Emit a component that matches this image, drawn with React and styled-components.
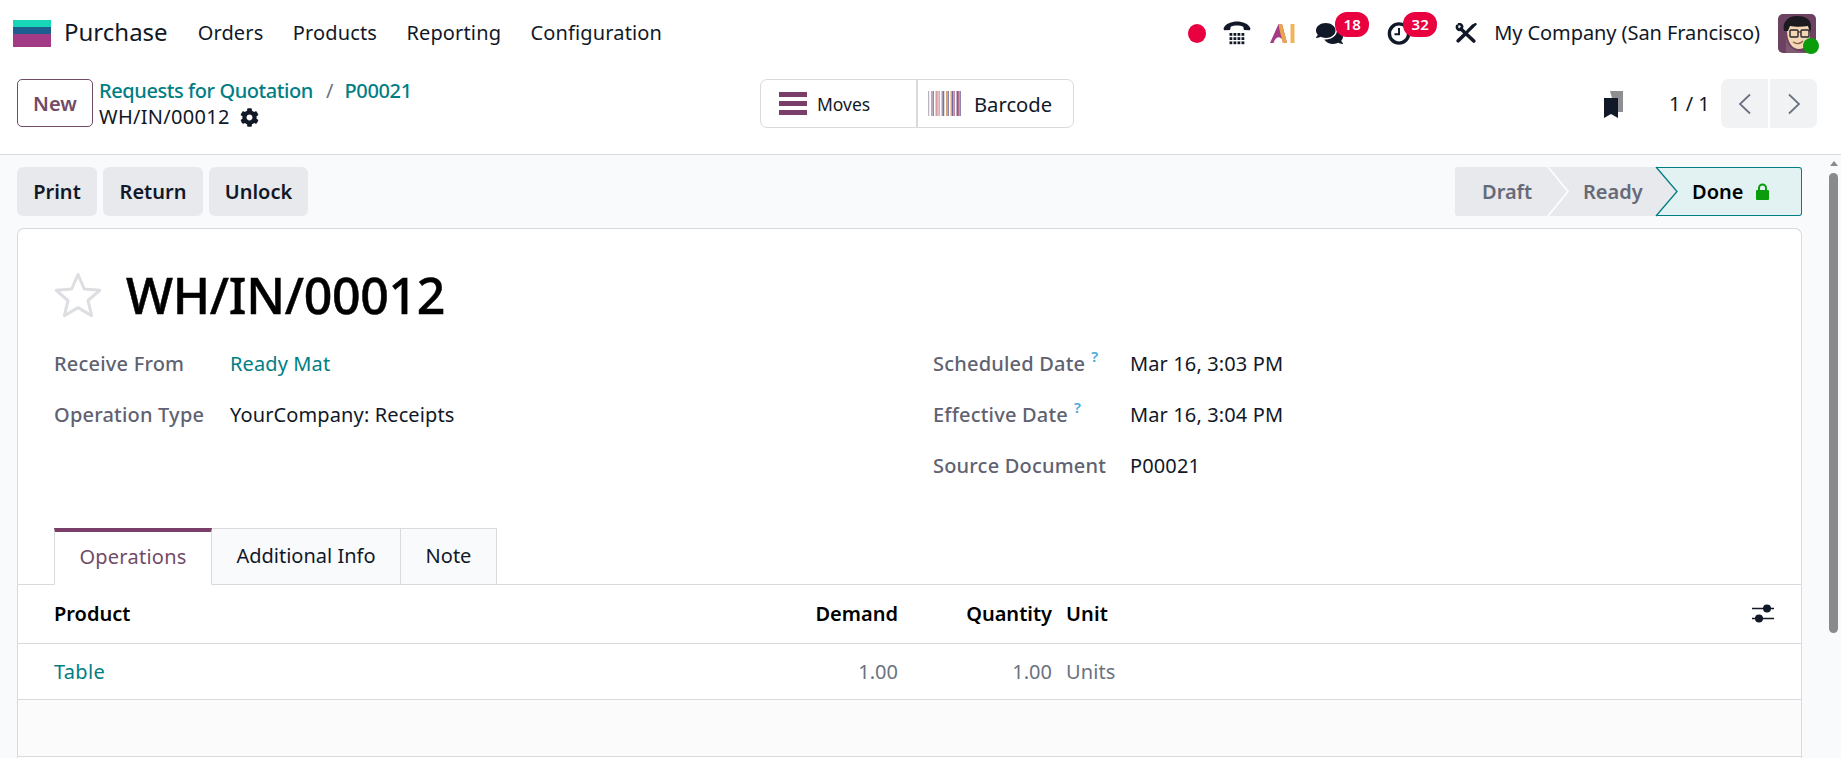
import React from "react";
import styled, { createGlobalStyle } from "styled-components";
import { FaComments, FaCog } from "react-icons/fa";

const Global = createGlobalStyle`
  html, body { margin: 0; padding: 0; height: 100%; overflow: hidden; background: #fff; }
  body { font-family: "Noto Sans", "Open Sans", sans-serif; font-size: 20px; color: #111827; font-variant-ligatures: none; }
  * { box-sizing: border-box; }
`;

const TEAL = "#017e84";
const PLUM = "#714b67";
const LINE = "#d8dadd";

const Page = styled.div`
  width: 1841px; height: 758px; overflow: hidden; display: flex; flex-direction: column;
`;
const Navbar = styled.header`
  flex: 0 0 66px; display: flex; align-items: center; padding: 0 25px 0 13px;
`;
const AppLogo = styled.svg`
  width: 38px; height: 27px; display: block; flex: none;
`;
const AppName = styled.span`
  margin: -2px 0 0 13px; font-size: 24px; line-height: 1;
`;
const Menu = styled.nav`
  display: flex; gap: 29.3px; margin: -2px 0 0 30px; font-size: 20px; letter-spacing: 0.15px;
`;
const Tray = styled.div`
  margin-left: auto; display: flex; align-items: center;
`;
const TrayItem = styled.div`
  position: relative; display: flex; align-items: center; justify-content: center;
  margin-left: ${(p) => p.$ml || 0}px; color: #111827;
`;
const RecordDot = styled.span`
  width: 18px; height: 19px; border-radius: 50%; background: #e8003f; display: block;
`;
const Badge = styled.span`
  position: absolute; top: ${(p) => p.$top}px; left: ${(p) => p.$left}px; width: 34px; height: 25px;
  border-radius: 12px; background: #e8003f; color: #fff; font-size: 15px; font-weight: 600;
  display: flex; align-items: center; justify-content: center;
`;
const Company = styled.span`
  margin: -2px 0 0 17px; font-size: 20px; white-space: nowrap; letter-spacing: -0.08px;
`;
const AvatarWrap = styled.div`
  position: relative; width: 38px; height: 39px; margin-left: 18px;
`;
const AvatarSvg = styled.svg`
  display: block; width: 38px; height: 39px; border-radius: 5px;
`;
const Online = styled.span`
  position: absolute; right: -3px; bottom: -1px; width: 16px; height: 16px;
  border-radius: 50%; background: #0a9c0a;
`;

const ControlPanel = styled.div`
  flex: 0 0 89px; display: grid; grid-template-columns: 743px 314px 1fr;
  padding: 13px 24px 0 17px; border-bottom: 1px solid ${LINE};
`;
const PanelLeft = styled.div`
  display: flex; gap: 6px; align-items: flex-start;
`;
const NewButton = styled.button`
  width: 76px; height: 48px; border: 1px solid ${PLUM}; border-radius: 5px; background: #fff;
  color: ${PLUM}; font: 600 20px "Noto Sans", sans-serif; padding: 0;
`;
const Crumbs = styled.div`
  display: flex; flex-direction: column; line-height: 26px; white-space: nowrap;
`;
const CrumbTop = styled.div`
  display: flex; align-items: center; height: 24px; font-weight: 500; color: ${TEAL};
`;
const CrumbParent = styled.span`
  letter-spacing: -0.42px;
`;
const CrumbLast = styled.span`
  letter-spacing: -0.35px;
`;
const CrumbSep = styled.span`
  color: #6b7280; font-weight: 400; margin: 0 11px 0 13px;
`;
const CrumbCurrent = styled.div`
  display: flex; align-items: center; gap: 10px; height: 28px; color: #111827; letter-spacing: 0.3px;
`;
const SwitchGroup = styled.div`
  height: 49px; display: flex; border: 1px solid ${LINE}; border-radius: 7px; width: 314px;
`;
const SwitchBtn = styled.div`
  display: flex; align-items: center; height: 100%;
  padding-left: ${(p) => p.$pl}px; width: ${(p) => p.$w}px;
  border-right: ${(p) => (p.$divider ? `2px solid ${LINE}` : "none")};
`;
const MovesIcon = styled.div`
  width: 28px; height: 23px; display: flex; flex-direction: column; justify-content: space-between;
  & > i { display: block; height: 5px; background: #7a3f68; }
`;
const SwitchLabel = styled.span`
  margin-left: ${(p) => p.$ml}px; font-size: ${(p) => p.$size}px; color: #111827;
`;
const Pager = styled.div`
  display: flex; align-items: center; justify-content: flex-end; height: 49px;
`;
const PagerText = styled.span`
  margin-left: 46px; width: 52px; white-space: nowrap;
`;
const PagerButtons = styled.div`
  display: flex; gap: 2px; border-radius: 7px; overflow: hidden;
`;
const PagerBtn = styled.div`
  width: 47px; height: 49px; background: #f1f2f4; display: flex; align-items: center; justify-content: center;
`;

const Body = styled.div`
  flex: 1; min-height: 0; display: flex; background: #f9fafb;
`;
const Main = styled.main`
  flex: 0 0 1827px; padding: 12px 25px 0 17px; display: flex; flex-direction: column; gap: 12px;
`;
const ActionRow = styled.div`
  display: flex; align-items: center; justify-content: space-between; height: 49px;
`;
const Actions = styled.div`
  display: flex; gap: 6px;
`;
const ActionBtn = styled.button`
  height: 49px; width: ${(p) => p.$w}px; border: 0; border-radius: 6px; background: #e7e9ed;
  color: #111827; font: 600 20px "Noto Sans", sans-serif; padding: 0;
`;
const StatusBar = styled.div`
  display: flex; height: 49px;
`;
const Step = styled.div`
  position: relative; width: ${(p) => p.$w}px; height: 49px; padding-left: ${(p) => p.$pl}px;
  display: flex; align-items: center; gap: 13px; font-weight: 600;
  background: ${(p) => (p.$done ? "#e2f2f3" : "#e7e9ed")};
  color: ${(p) => (p.$done ? "#000" : "#666a78")};
  border-radius: ${(p) => (p.$first ? "3px 0 0 3px" : p.$done ? "0 3px 3px 0" : "0")};
  ${(p) => p.$done && `border: 1.5px solid ${TEAL}; border-left: 0;`}
`;
const StepArrow = styled.svg`
  position: absolute; left: 0; top: ${(p) => (p.$done ? "-1.5px" : "0")}; width: 22px; height: 49px; overflow: visible;
`;
const Sheet = styled.section`
  flex: 1; background: #fff; border: 1px solid ${LINE}; border-bottom: 0; border-radius: 7px 7px 0 0;
  padding-top: 37px; min-height: 0;
`;
const TitleRow = styled.div`
  display: flex; align-items: center; gap: 24px; height: 58px; padding-left: 36px;
`;
const Title = styled.h1`
  margin: 0; font-size: 50px; font-weight: 500; line-height: 1; color: #000; letter-spacing: -0.3px;
  -webkit-text-stroke: 0.5px #000;
`;
const Fields = styled.div`
  margin-top: 14px; display: grid; grid-template-columns: 879px 1fr; padding-left: 36px;
`;
const FieldCol = styled.div`
  display: grid; grid-auto-rows: 51.2px; grid-template-columns: ${(p) => p.$label}px 1fr; align-items: center;
  align-content: start;
`;
const Label = styled.div`
  font-weight: 500; color: #5f6270; white-space: nowrap; letter-spacing: 0.2px;
`;
const Help = styled.span`
  color: #4aa9dc; font-size: 15px; font-weight: 600; margin-left: 6px; line-height: 0;
  position: relative; top: -9px;
`;
const Value = styled.div`
  color: ${(p) => (p.$link ? TEAL : "#111827")}; white-space: nowrap; letter-spacing: 0.12px;
`;
const TabBar = styled.div`
  margin-top: 36px; height: 57px; display: flex; padding-left: 36px; border-bottom: 1px solid ${LINE};
`;
const Tab = styled.div`
  width: ${(p) => p.$w}px; height: 57px; display: flex; align-items: center; justify-content: center;
  border: 1px solid ${LINE}; border-left-width: ${(p) => (p.$active ? 1 : 0)}px;
  background: ${(p) => (p.$active ? "#fff" : "#f9fafb")};
  color: ${(p) => (p.$active ? PLUM : "#111827")};
  padding-bottom: ${(p) => (p.$active ? 3 : 1)}px;
  ${(p) => p.$active && `border-bottom-color: #fff; border-top: 4px solid #7a3f68; letter-spacing: 0.25px;`}
`;
const Row = styled.div`
  display: grid; grid-template-columns: 686px 158px 154px 1fr; align-items: center;
  height: ${(p) => p.$h}px; padding: 0 27px 0 36px; border-bottom: 1px solid ${LINE};
  background: ${(p) => (p.$empty ? "#fbfbfc" : "#fff")};
  font-weight: ${(p) => (p.$head ? 600 : 400)};
  color: ${(p) => (p.$head ? "#000" : "#6b7280")};
`;
const Num = styled.div`
  text-align: right;
`;
const UnitCell = styled.div`
  padding-left: 14px; display: flex; justify-content: space-between; align-items: center; letter-spacing: 0.1px;
`;
const ProductLink = styled.div`
  color: ${TEAL}; letter-spacing: 0.3px;
`;
const ScrollTrack = styled.aside`
  flex: 0 0 14px; padding: 6px 3px 0 2px; display: flex; flex-direction: column; align-items: center;
`;
const ScrollArrow = styled.span`
  width: 0; height: 0; border-left: 4.5px solid transparent; border-right: 4.5px solid transparent;
  border-bottom: 5px solid #8a8a8a;
`;
const ScrollThumb = styled.span`
  width: 9px; height: 460px; margin-top: 7px; border-radius: 5px; background: #8a8a8a;
`;

const barColors = ["#b9b3c4","#fff","#c9a2b4","#8f8aa3","#fff","#d49aa8","#c9bfc9","#e0a9a0","#fff","#a79bb9","#7f6f9a","#fff","#d8a36a","#8a86b0","#fff","#e2a56a","#6f6a9a","#c98aa0","#fff","#7e5f96","#b56f8e","#8e87b5"];
const Barcode = () => (
  <svg width="33" height="25" viewBox="0 0 33 25" style={{ display: "block" }}>
    {barColors.map((c, i) => (
      <rect key={i} x={i * 1.5} y="0" width="1.5" height="25" fill={c} />
    ))}
  </svg>
);

const Phone = () => (
  <svg width="28" height="24" viewBox="0 0 28 24">
    <path d="M0.5 7.5C2.5 2.5 8.5 0.5 14 0.5s11.5 2 13.5 7l-.6 1.8-6-.2-.6-3.4C18.8 5 16.4 4.6 14 4.6s-4.8.4-6.3 1.1L7.1 9.100l-6 .2z" fill="#111827" />
    {[0, 1, 2, 3].map((c) =>
      [0, 1, 2].map((r) => (
        <rect key={`${c}${r}`} x={6.5 + c * 4} y={12 + r * 4.2} width="2.8" height="2.8" fill="#111827" />
      ))
    )}
  </svg>
);
const AiLogo = () => (
  <svg width="26" height="20" viewBox="0 0 26 20">
    <path d="M0 20 L8.5 1 L12 1 L17 20 L13 20 L12 16 C8 12 5 15 3.5 20Z" fill="#a53b87" />
    <path d="M8.5 1 L12 1 L17 20 L13 20 L10 9 Z" fill="#e9a74a" />
    <rect x="20.5" y="1" width="4" height="19" fill="#efb55c" />
  </svg>
);
const Clock = () => (
  <svg width="24" height="23" viewBox="0 0 24 23">
    <circle cx="12" cy="11.5" r="9.6" fill="none" stroke="#111827" strokeWidth="3.4" />
    <path d="M12 6v6.3H7.5" fill="none" stroke="#111827" strokeWidth="2" />
  </svg>
);
const Tools = () => (
  <svg width="22" height="20" viewBox="0 0 22 20" style={{ display: "block" }}>
    <g fill="none" stroke="#111827" strokeLinecap="round">
      <path d="M6 6L18.8 18" strokeWidth="3.6" />
      <path d="M2.2 2.8C1.2 5.4 3.4 7.6 6.2 6.6L7.2 3.6C6.8 1.8 5.4 1 4 1" strokeWidth="2.6" />
      <path d="M9.6 11.4L3.2 17.8" strokeWidth="3.6" />
      <path d="M12.6 8.400L18 3" strokeWidth="3.2" />
      <path d="M18.2 2.800L20.4 1.200" strokeWidth="2.6" />
    </g>
  </svg>
);
const Sliders = () => (
  <svg width="22" height="19" viewBox="0 0 22 19">
    <path d="M0 4.5h22M0 14.5h22" stroke="#111827" strokeWidth="1.6" />
    <circle cx="15" cy="4.5" r="4" fill="#111827" />
    <circle cx="7" cy="14.5" r="4" fill="#111827" />
  </svg>
);
const Star = () => (
  <svg width="48" height="46" viewBox="0 0 48 46">
    <path d="M24 2.5l6.3 14.5 15.5 1.3-11.8 10.2 3.6 15.2L24 35.6l-13.6 8.1 3.6-15.2L2.2 18.3l15.5-1.3z" fill="none" stroke="#dcdee2" strokeWidth="3" strokeLinejoin="round" />
  </svg>
);
const Chevron = ({ dir }) => (
  <svg width="14" height="22" viewBox="0 0 14 22">
    <path d={dir === "left" ? "M12 1.5L2 11l10 9.5" : "M2 1.5L12 11 2 20.5"} fill="none" stroke="#6b7280" strokeWidth="1.8" />
  </svg>
);
const Bookmarks = () => (
  <svg width="19" height="27" viewBox="0 0 19 27" style={{ display: "block", marginTop: 1 }}>
    <path d="M6 0h13v21h-7z" fill="#8f8f92" />
    <path d="M0 7h14v20l-7-4-7 4z" fill="#111827" />
  </svg>
);
const Lock = () => (
  <svg width="13" height="17" viewBox="0 0 13 17" style={{ display: "block" }}>
    <path d="M3 7V5a3.5 3.5 0 017 0v2" fill="none" stroke="#0a9c0a" strokeWidth="2" />
    <rect x="0" y="7" width="13" height="10" rx="1" fill="#0a9c0a" />
  </svg>
);
const Avatar = () => (
  <AvatarSvg viewBox="0 0 38 39">
    <rect width="38" height="39" fill="#6d4160" />
    <path d="M8 18c-1 10 3 17 12 19l10 2H8z" fill="#7f5a72" />
    <path d="M9 16c0 12 5 19 12 19 6 0 11-6 11-15V12H9z" fill="#f3d6b4" />
    <path d="M6 17C4 8 10 2 19 2c8 0 15 3 14 12l-1 5-2-7c-6 1-13 1-18 0l-2 5z" fill="#1b1a1f" />
    <rect x="12" y="16" width="8" height="7" rx="1" fill="none" stroke="#27262b" strokeWidth="1.4" />
    <rect x="23" y="16" width="8" height="7" rx="1" fill="none" stroke="#27262b" strokeWidth="1.4" />
    <path d="M20 18h3" stroke="#27262b" strokeWidth="1.2" />
    <path d="M15 28c3 2 7 2 10-1" fill="none" stroke="#8b5a45" strokeWidth="1.3" />
  </AvatarSvg>
);

export default function App() {
  return (
    <Page>
      <Global />
      <Navbar>
        <AppLogo viewBox="0 0 38 27">
          <rect width="38" height="7" fill="#1ad6b8" />
          <rect y="7" width="38" height="7" fill="#1c5f8f" />
          <rect y="14" width="38" height="13" fill="#a33a85" />
        </AppLogo>
        <AppName>Purchase</AppName>
        <Menu>
          <span>Orders</span>
          <span>Products</span>
          <span>Reporting</span>
          <span>Configuration</span>
        </Menu>
        <Tray>
          <TrayItem><RecordDot /></TrayItem>
          <TrayItem $ml={17}><Phone /></TrayItem>
          <TrayItem $ml={19}><AiLogo /></TrayItem>
          <TrayItem $ml={20}>
            <FaComments size={27} />
            <Badge $left={19} $top={-8}>18</Badge>
          </TrayItem>
          <TrayItem $ml={44}>
            <Clock />
            <Badge $left={16} $top={-10}>32</Badge>
          </TrayItem>
          <TrayItem $ml={44}><Tools /></TrayItem>
          <Company>My Company (San Francisco)</Company>
          <AvatarWrap>
            <Avatar />
            <Online />
          </AvatarWrap>
        </Tray>
      </Navbar>

      <ControlPanel>
        <PanelLeft>
          <NewButton>New</NewButton>
          <Crumbs>
            <CrumbTop>
              <CrumbParent>Requests for Quotation</CrumbParent>
              <CrumbSep>/</CrumbSep>
              <CrumbLast>P00021</CrumbLast>
            </CrumbTop>
            <CrumbCurrent>
              <span>WH/IN/00012</span>
              <FaCog size={19} />
            </CrumbCurrent>
          </Crumbs>
        </PanelLeft>
        <SwitchGroup>
          <SwitchBtn $w={157} $pl={18} $divider>
            <MovesIcon><i /><i /><i /></MovesIcon>
            <SwitchLabel $ml={10} $size={17.5}>Moves</SwitchLabel>
          </SwitchBtn>
          <SwitchBtn $w={155} $pl={10}>
            <Barcode />
            <SwitchLabel $ml={13} $size={20.2}>Barcode</SwitchLabel>
          </SwitchBtn>
        </SwitchGroup>
        <Pager>
          <Bookmarks />
          <PagerText>1 / 1</PagerText>
          <PagerButtons>
            <PagerBtn><Chevron dir="left" /></PagerBtn>
            <PagerBtn><Chevron dir="right" /></PagerBtn>
          </PagerButtons>
        </Pager>
      </ControlPanel>

      <Body>
        <Main>
          <ActionRow>
            <Actions>
              <ActionBtn $w={80}>Print</ActionBtn>
              <ActionBtn $w={100}>Return</ActionBtn>
              <ActionBtn $w={99}>Unlock</ActionBtn>
            </Actions>
            <StatusBar>
              <Step $w={93} $pl={27} $first>Draft</Step>
              <Step $w={108} $pl={35}>
                <StepArrow viewBox="0 0 22 49">
                  <path d="M0 0L20 24.5 0 49z" fill="#e7e9ed" />
                  <path d="M0 0L20 24.5 0 49" fill="none" stroke="#fff" strokeWidth="1.6" />
                </StepArrow>
                Ready
              </Step>
              <Step $w={146} $pl={36} $done>
                <StepArrow viewBox="0 0 22 49" $done>
                  <path d="M0 0L21 24.5 0 49z" fill="#e7e9ed" />
                  <path d="M0 0L21 24.5 0 49" fill="none" stroke={TEAL} strokeWidth="1.3" />
                </StepArrow>
                Done
                <Lock />
              </Step>
            </StatusBar>
          </ActionRow>
          <Sheet>
            <TitleRow>
              <Star />
              <Title>WH/IN/00012</Title>
            </TitleRow>
            <Fields>
              <FieldCol $label={176}>
                <Label>Receive From</Label>
                <Value $link>Ready Mat</Value>
                <Label>Operation Type</Label>
                <Value>YourCompany: Receipts</Value>
              </FieldCol>
              <FieldCol $label={197}>
                <Label>Scheduled Date<Help>?</Help></Label>
                <Value>Mar 16, 3:03 PM</Value>
                <Label>Effective Date<Help>?</Help></Label>
                <Value>Mar 16, 3:04 PM</Value>
                <Label>Source Document</Label>
                <Value>P00021</Value>
              </FieldCol>
            </Fields>
            <TabBar>
              <Tab $w={158} $active>Operations</Tab>
              <Tab $w={189}>Additional Info</Tab>
              <Tab $w={96}>Note</Tab>
            </TabBar>
            <Row $h={59} $head>
              <div>Product</div>
              <Num>Demand</Num>
              <Num>Quantity</Num>
              <UnitCell>Unit<Sliders /></UnitCell>
            </Row>
            <Row $h={56}>
              <ProductLink>Table</ProductLink>
              <Num>1.00</Num>
              <Num>1.00</Num>
              <UnitCell>Units</UnitCell>
            </Row>
            <Row $h={57} $empty />
          </Sheet>
        </Main>
        <ScrollTrack>
          <ScrollArrow />
          <ScrollThumb />
        </ScrollTrack>
      </Body>
    </Page>
  );
}
